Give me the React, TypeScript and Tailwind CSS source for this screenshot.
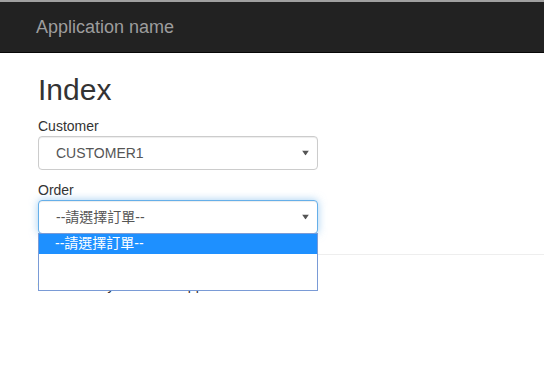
import React from "react";

const font = "font-['Liberation_Sans','Noto_Sans_CJK_TC',sans-serif]";

function Arrow() {
    return (
        <svg width="7" height="5" viewBox="0 0 7 5" className="absolute right-[8px] top-1/2 -translate-y-1/2">
            <path d="M0 0 H7 L3.5 5 Z" fill="#555" />
        </svg>
    );
}

function FakeSelect({ value, focused }: { value: string; focused?: boolean }) {
    return (
        <div
            className={
                focused
                    ? "relative h-[34px] w-[280px] rounded border border-[#66afe9] bg-white pl-[17px] text-[14px] leading-[32px] text-[#555] shadow-[inset_0_1px_1px_rgba(0,0,0,0.075),0_0_8px_rgba(102,175,233,0.6)]"
                    : "relative h-[34px] w-[280px] rounded border border-[#ccc] bg-white pl-[17px] text-[14px] leading-[32px] text-[#555] shadow-[inset_0_1px_1px_rgba(0,0,0,0.075)]"
            }
        >
            {value}
            <Arrow />
        </div>
    );
}

export default function App() {
    return (
        <div className={`min-h-[388px] w-full bg-white ${font} text-[#333]`}>
            <div className="h-[2px] bg-[#a0a0a0]" />
            <div className="flex h-[51px] items-center border-b border-[#080808] bg-[#222] pl-[36px]">
                <span className="text-[18px] leading-[20px] text-[#9d9d9d]">Application name</span>
            </div>

            <div className="pl-[38px]">
                <h2 className="mt-[20px] mb-[10px] text-[30px] leading-[33px] font-normal">Index</h2>

                <div className="mb-[10px]">
                    <div className="h-[20px] text-[14px] leading-[20px]">Customer</div>
                    <FakeSelect value="CUSTOMER1" />
                </div>

                <div className="relative w-[280px]">
                    <div className="h-[20px] text-[14px] leading-[20px]">Order</div>
                    <FakeSelect value="--請選擇訂單--" focused />
                    <div className="absolute left-0 top-[53px] z-10 h-[58px] w-[280px] border border-[#7a9bd6] bg-white">
                        <div className="h-[20px] bg-[#1e90ff] pl-[16px] text-[14px] leading-[19px] text-white">--請選擇訂單--</div>
                    </div>
                </div>

                <hr className="mt-[20px] border-0 border-t border-[#eee]" />
                <footer>
                    <p className="mt-[20px] text-[14px] leading-[20px]">© 2017 - My ASP.NET Application</p>
                </footer>
            </div>
        </div>
    );
}
